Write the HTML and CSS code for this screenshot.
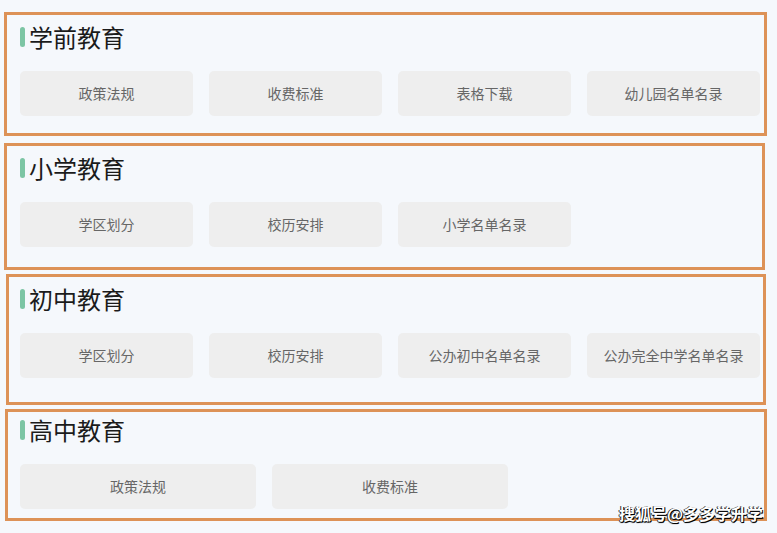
FILE: index.html
```html
<!DOCTYPE html>
<html lang="zh-CN">
<head>
    <meta charset="UTF-8">
    <meta name="viewport" content="width=device-width, initial-scale=1.0">
    <title>教育服务</title>
    <link rel="stylesheet" href="styles.css">
</head>
<body>
    <main class="page">
        <section class="edu-block">
            <h2 class="edu-title">学前教育</h2>
            <div class="link-grid">
                <a class="link-btn">政策法规</a>
                <a class="link-btn">收费标准</a>
                <a class="link-btn">表格下载</a>
                <a class="link-btn">幼儿园名单名录</a>
            </div>
        </section>
        <section class="edu-block">
            <h2 class="edu-title">小学教育</h2>
            <div class="link-grid">
                <a class="link-btn">学区划分</a>
                <a class="link-btn">校历安排</a>
                <a class="link-btn">小学名单名录</a>
            </div>
        </section>
        <section class="edu-block">
            <h2 class="edu-title">初中教育</h2>
            <div class="link-grid">
                <a class="link-btn">学区划分</a>
                <a class="link-btn">校历安排</a>
                <a class="link-btn">公办初中名单名录</a>
                <a class="link-btn">公办完全中学名单名录</a>
            </div>
        </section>
        <section class="edu-block">
            <h2 class="edu-title">高中教育</h2>
            <div class="link-grid three">
                <a class="link-btn">政策法规</a>
                <a class="link-btn">收费标准</a>
            </div>
        </section>
    </main>
    <div class="watermark">搜狐号@多多学升学</div>
</body>
</html>
```

FILE: styles.css
```css
body {
    margin: 0;
    background: #f5f8fc;
    font-family: "Noto Sans CJK SC", "Noto Sans", sans-serif;
    color: #222;
    position: relative;
    height: 533px;
    overflow: hidden;
}
.page {
    padding-top: 12px;
}
.edu-block {
    position: relative;
    padding: 10px 17px 27px 20px;
}
/* hand-drawn orange frame around each block */
.edu-block::after {
    content: "";
    position: absolute;
    top: 0;
    bottom: 7px;
    left: 4px;
    right: 10px;
    border: 3px solid #dd9257;
    pointer-events: none;
}
.edu-block:nth-child(2)::after {
    bottom: 4px;
    right: 12px;
}
.edu-block:nth-child(3)::after {
    bottom: 0;
    left: 6px;
    right: 11px;
}
.edu-block:nth-child(4)::after {
    top: 4px;
    bottom: 15px;
    left: 5px;
}
.edu-title {
    display: flex;
    align-items: center;
    gap: 4px;
    margin: 0 0 19px;
    height: 30px;
    font-size: 24px;
    font-weight: normal;
    line-height: 30px;
    color: #1b1b1b;
}
.edu-title::before {
    content: "";
    width: 5px;
    height: 20px;
    border-radius: 3px;
    background: #7cc5a4;
}
.link-grid {
    display: grid;
    grid-template-columns: repeat(4, 1fr);
    gap: 16px;
}
.link-grid.three {
    grid-template-columns: repeat(3, 1fr);
}
.link-btn {
    height: 45px;
    box-sizing: border-box;
    padding-bottom: 2px;
    display: flex;
    align-items: center;
    justify-content: center;
    background: #eeeeee;
    border-radius: 5px;
    font-size: 14px;
    color: #666;
    cursor: pointer;
}
.watermark {
    position: absolute;
    right: 14px;
    bottom: 8px;
    font-size: 16px;
    font-weight: bold;
    color: #fff;
    text-shadow: 1px 1px 0 #000, -1px 0 0 #333, 0 1px 1px #000;
}
```
